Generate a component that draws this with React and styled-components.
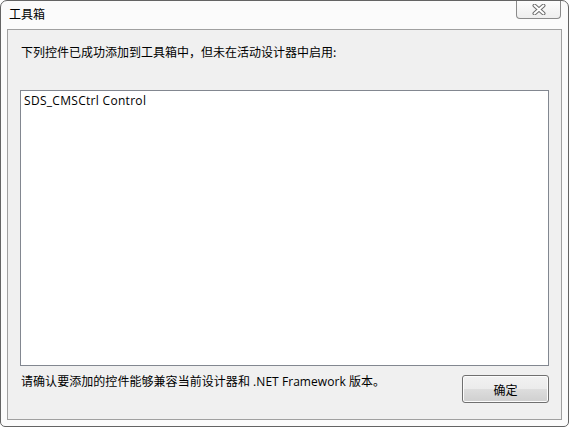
import React from 'react';
import styled, { createGlobalStyle } from 'styled-components';

const GlobalStyle = createGlobalStyle`
  html, body {
    margin: 0;
    padding: 0;
    background: #ffffff;
  }
  body {
    font-family: "Segoe UI", "Open Sans", "Noto Sans CJK SC", sans-serif;
    font-size: 12px;
    color: #000;
  }
`;

const App = () => {
  return (
    <>
      <GlobalStyle />
      <Window>
        <TitleBar>
          <Title>工具箱</Title>
          <CloseButton aria-label="关闭">
            <svg width="14" height="11" viewBox="0 0 14 11">
              <path d="M2.5 1.5 L11.5 9.5 M11.5 1.5 L2.5 9.5" stroke="#6e6e6e" strokeWidth="4" strokeLinecap="round" fill="none" />
              <path d="M2.5 1.5 L11.5 9.5 M11.5 1.5 L2.5 9.5" stroke="#ffffff" strokeWidth="2" strokeLinecap="round" fill="none" />
            </svg>
          </CloseButton>
        </TitleBar>
        <Client>
          <Message>下列控件已成功添加到工具箱中，但未在活动设计器中启用:</Message>
          <ListBox>
            <ListItem>SDS_CMSCtrl Control</ListItem>
          </ListBox>
          <BottomRow>
            <Note>请确认要添加的控件能够兼容当前设计器和 .NET Framework 版本。</Note>
            <OkButton>确定</OkButton>
          </BottomRow>
        </Client>
      </Window>
    </>
  );
};

export default App;

const Window = styled.div`
  box-sizing: border-box;
  width: 569px;
  height: 427px;
  display: flex;
  flex-direction: column;
  background: #fbfbfb;
  border: 1px solid #646464;
  border-radius: 7px 7px 5px 5px;
  overflow: hidden;
`;

const TitleBar = styled.div`
  height: 28px;
  display: flex;
  justify-content: space-between;
  align-items: flex-start;
  padding-left: 8px;
  padding-right: 7px;
  flex-shrink: 0;
`;

const Title = styled.div`
  margin-top: 5px;
  font-size: 12px;
  line-height: 16px;
  font-family: "Noto Sans CJK SC", sans-serif;
`;

const CloseButton = styled.div`
  box-sizing: border-box;
  width: 45px;
  height: 19px;
  margin-top: -1px;
  display: flex;
  align-items: center;
  justify-content: center;
  border: 1px solid #8a8a8a;
  border-top: none;
  border-radius: 0 0 4px 4px;
  background: linear-gradient(#fdfdfd, #eeeeee);
`;

const Client = styled.div`
  flex: 1;
  display: flex;
  flex-direction: column;
  margin: 0 6px 6px 6px;
  padding: 14px 12px 16px 12px;
  background: #f0f0f0;
  border: 1px solid #a0a0a0;
`;

const Message = styled.div`
  line-height: 16px;
  padding-left: 1px;
  font-family: "Noto Sans CJK SC", sans-serif;
`;

const ListBox = styled.div`
  flex: 1;
  margin-top: 30px;
  background: #ffffff;
  border: 1px solid #828790;
  padding: 2px 3px;
`;

const ListItem = styled.div`
  line-height: 16px;
  letter-spacing: 0.3px;
`;

const BottomRow = styled.div`
  display: flex;
  justify-content: space-between;
  align-items: flex-start;
  margin-top: 7px;
`;

const Note = styled.div`
  line-height: 16px;
  padding-left: 1px;
  padding-top: 1px;
  letter-spacing: 0.05px;
`;

const OkButton = styled.div`
  box-sizing: border-box;
  width: 87px;
  height: 28px;
  margin-top: 2px;
  display: flex;
  align-items: center;
  justify-content: center;
  border: 1px solid #707070;
  border-radius: 3px;
  background: linear-gradient(#f2f2f2 0%, #ebebeb 50%, #dddddd 51%, #cfcfcf 100%);
  box-shadow: inset 0 0 0 1px #fcfcfc;
  font-family: "Noto Sans CJK SC", sans-serif;
`;
